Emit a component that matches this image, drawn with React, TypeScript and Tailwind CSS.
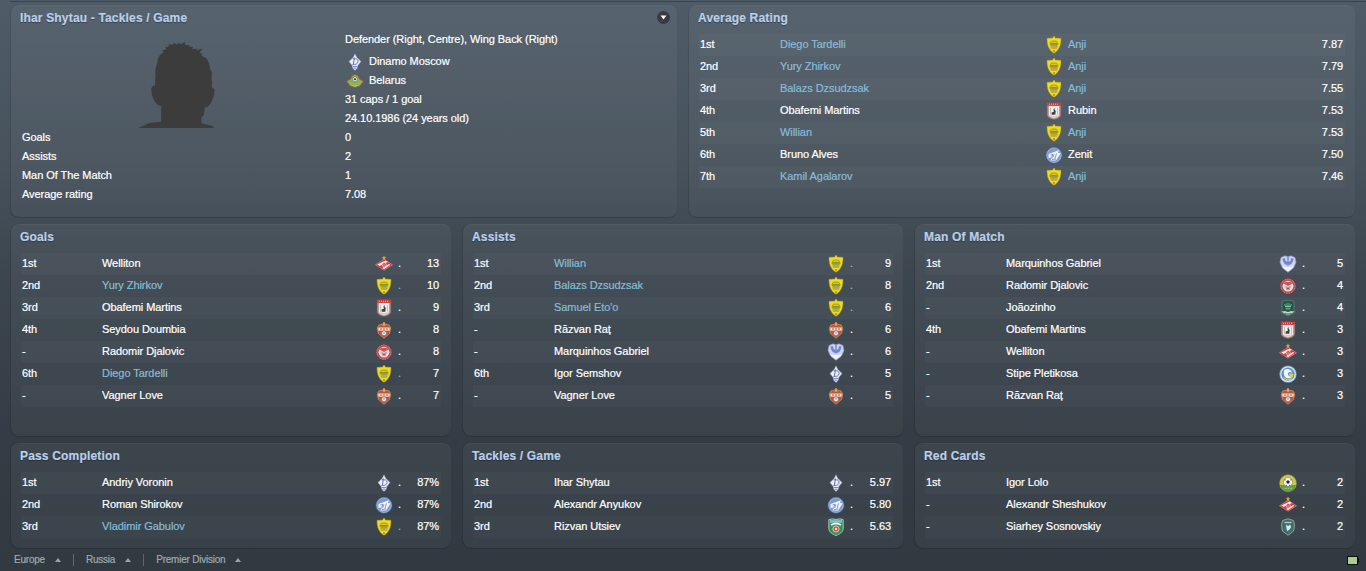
import type { ReactNode } from "react";
import clsx from "clsx";

type Club =
  | "anji"
  | "rubin"
  | "zenit"
  | "spartak"
  | "cska"
  | "amkar"
  | "dinamo"
  | "krylia"
  | "krasnodar"
  | "rostov"
  | "terek"
  | "kuban"
  | "tom"
  | "belarus";

type TRow = {
  rank: string;
  name: string;
  club: Club;
  value: string;
  team?: string;
  own?: boolean;
};

const averageRating: TRow[] = [
  { rank: "1st", name: "Diego Tardelli", club: "anji", team: "Anji", value: "7.87", own: true },
  { rank: "2nd", name: "Yury Zhirkov", club: "anji", team: "Anji", value: "7.79", own: true },
  { rank: "3rd", name: "Balazs Dzsudzsak", club: "anji", team: "Anji", value: "7.55", own: true },
  { rank: "4th", name: "Obafemi Martins", club: "rubin", team: "Rubin", value: "7.53" },
  { rank: "5th", name: "Willian", club: "anji", team: "Anji", value: "7.53", own: true },
  { rank: "6th", name: "Bruno Alves", club: "zenit", team: "Zenit", value: "7.50" },
  { rank: "7th", name: "Kamil Agalarov", club: "anji", team: "Anji", value: "7.46", own: true },
];

const goals: TRow[] = [
  { rank: "1st", name: "Welliton", club: "spartak", value: "13" },
  { rank: "2nd", name: "Yury Zhirkov", club: "anji", value: "10", own: true },
  { rank: "3rd", name: "Obafemi Martins", club: "rubin", value: "9" },
  { rank: "4th", name: "Seydou Doumbia", club: "cska", value: "8" },
  { rank: "-", name: "Radomir Djalovic", club: "amkar", value: "8" },
  { rank: "6th", name: "Diego Tardelli", club: "anji", value: "7", own: true },
  { rank: "-", name: "Vagner Love", club: "cska", value: "7" },
];

const assists: TRow[] = [
  { rank: "1st", name: "Willian", club: "anji", value: "9", own: true },
  { rank: "2nd", name: "Balazs Dzsudzsak", club: "anji", value: "8", own: true },
  { rank: "3rd", name: "Samuel Eto'o", club: "anji", value: "6", own: true },
  { rank: "-", name: "Răzvan Raț", club: "cska", value: "6" },
  { rank: "-", name: "Marquinhos Gabriel", club: "krylia", value: "6" },
  { rank: "6th", name: "Igor Semshov", club: "dinamo", value: "5" },
  { rank: "-", name: "Vagner Love", club: "cska", value: "5" },
];

const manOfMatch: TRow[] = [
  { rank: "1st", name: "Marquinhos Gabriel", club: "krylia", value: "5" },
  { rank: "2nd", name: "Radomir Djalovic", club: "amkar", value: "4" },
  { rank: "-", name: "Joãozinho", club: "krasnodar", value: "4" },
  { rank: "4th", name: "Obafemi Martins", club: "rubin", value: "3" },
  { rank: "-", name: "Welliton", club: "spartak", value: "3" },
  { rank: "-", name: "Stipe Pletikosa", club: "rostov", value: "3" },
  { rank: "-", name: "Răzvan Raț", club: "cska", value: "3" },
];

const passCompletion: TRow[] = [
  { rank: "1st", name: "Andriy Voronin", club: "dinamo", value: "87%" },
  { rank: "2nd", name: "Roman Shirokov", club: "zenit", value: "87%" },
  { rank: "3rd", name: "Vladimir Gabulov", club: "anji", value: "87%", own: true },
];

const tackles: TRow[] = [
  { rank: "1st", name: "Ihar Shytau", club: "dinamo", value: "5.97" },
  { rank: "2nd", name: "Alexandr Anyukov", club: "zenit", value: "5.80" },
  { rank: "3rd", name: "Rizvan Utsiev", club: "terek", value: "5.63" },
];

const redCards: TRow[] = [
  { rank: "1st", name: "Igor Lolo", club: "kuban", value: "2" },
  { rank: "-", name: "Alexandr Sheshukov", club: "spartak", value: "2" },
  { rank: "-", name: "Siarhey Sosnovskiy", club: "tom", value: "2" },
];

const playerStats = [
  ["Goals", "0"],
  ["Assists", "2"],
  ["Man Of The Match", "1"],
  ["Average rating", "7.08"],
];

const badges: Record<Club, ReactNode> = {
  anji: (
    <>
      <path d="M8 2V.4h2V2l6 .3c0 7-1.500 11.500-7 15-5.500-3.500-7-8-7-15z" fill="#efdb1f" stroke="#a8941c" strokeWidth=".5" />
      <path d="M5 7.200 6.500 5h5L13 7.200v1.600H5z" fill="#d9c322" stroke="#8a8226" strokeWidth=".6" />
      <path d="M5.500 7.800h7" stroke="#6b7030" strokeWidth=".9" />
      <path d="M5.500 9.800h7" stroke="#6ba04a" strokeWidth="1" />
      <path d="M5.500 11h7" stroke="#7f9590" strokeWidth="1" />
      <path d="M6 12.200h6" stroke="#cc8140" strokeWidth=".9" />
      <path d="M8 15h2" stroke="#7a6d18" strokeWidth="1" />
    </>
  ),
  rubin: (
    <>
      <path d="M2.200 1h13.600v11.500c0 2.500-2.500 4-6.800 5-4.300-1-6.800-2.500-6.800-5z" fill="#c79593" stroke="#8a6565" strokeWidth=".5" />
      <path d="M2.200.8h13.600v3H2.200z" fill="#d9363a" />
      <path d="M4 2.200h10" stroke="#f3c5c4" strokeWidth="1" strokeDasharray="1 1" />
      <path d="M4 4h10v8.500c0 1.700-2 2.800-5 3.500-3-.7-5-1.800-5-3.500z" fill="#f1efec" />
      <path d="M5.500 6v6.500c0 1 1.500 2 3.500 2.500 2-.5 3.500-1.500 3.500-2.500V6" fill="none" stroke="#9dba9f" strokeWidth=".8" />
      <path d="M10.800 5.500 9.300 7l1.400 2-.4 3.700H6.700L6.600 10.500l2.200-.8-.3-2.700z" fill="#3d3f41" />
    </>
  ),
  zenit: (
    <>
      <circle cx="9" cy="9.200" r="8.500" fill="#3f5f9d" />
      <circle cx="9" cy="9.200" r="7.300" fill="#7f9bca" stroke="#c3d1ea" strokeWidth=".6" />
      <path d="M3.500 8 13.800 4.200l-.8 2.800 2.700.3-4.700 7.200H5.500l1.500-3-3.500.5z" fill="#eef2fa" />
      <path d="m5.500 9 2.500-.6-1.500 3M9 8.500l-1.500 3.500M11.500 7.500 10 12.500m-3 1 4-.5" fill="none" stroke="#5673ab" strokeWidth=".7" />
    </>
  ),
  spartak: (
    <>
      <path d="M9 .4 9.700 2h1.700L10 3l.5 2L9 4 7.500 5 8 3 6.600 2h1.700z" fill="#dca438" />
      <path d="M9 4.200 17.600 9.800 9 15.200.4 9.800z" fill="#d6353b" stroke="#e2a09e" strokeWidth=".5" />
      <path d="M2.200 9.600 10.500 5.500l2.500 1.600-8.300 4z" fill="#f0e9e6" />
      <path d="m7 13 7-4 1.500.8L9 14.300z" fill="#f0dedb" />
      <circle cx="9.200" cy="9.800" r="2.100" fill="#c9343a" stroke="#f5eeee" strokeWidth=".6" />
      <path d="M8.200 10h2" stroke="#eee" strokeWidth=".7" />
    </>
  ),
  cska: (
    <>
      <path d="m9 1 1.700 2.300 3.300.5 1.800 3.200-1.200 5.500L9 17.300l-5.600-4.800L2.200 7 4 3.800l3.300-.5z" fill="#c65335" stroke="#d8a86f" strokeWidth=".6" />
      <path d="m9 1.500 1.500 3h-3z" fill="#e8c05b" />
      <path d="M3.300 6.500h11.400v3.200H3.300z" fill="#f0dfcd" />
      <path d="M5 8h2m1 0h2m1 0h2" stroke="#a85348" strokeWidth="1" />
      <circle cx="9" cy="12.300" r="2.500" fill="#f1eeea" stroke="#5b4c67" strokeWidth=".6" />
      <path d="M8 12h2" stroke="#7a6f8c" strokeWidth=".8" />
    </>
  ),
  amkar: (
    <>
      <circle cx="9" cy="9.200" r="8.400" fill="#70373d" />
      <circle cx="9" cy="9.200" r="7.200" fill="#b55055" stroke="#b9a5a6" strokeWidth="1" strokeDasharray="1 .8" />
      <circle cx="9" cy="9.200" r="5.400" fill="#dedada" />
      <path d="M4.500 6.500 9 9l4.500-2.500L12 5H6z" fill="#cf5259" />
      <path d="M6 8.500 9 10l3-1.500-1.500 4.500h-3z" fill="#a5a0a2" />
      <path d="M8 11.500h2" stroke="#c33d45" strokeWidth="1.200" />
    </>
  ),
  dinamo: (
    <>
      <path d="m9 .8 1.700 3.400L15 8.600l-3.300 4.200-.4 2.500L9 17.400l-2.300-2.100-.4-2.500L3 8.600l4.300-4.400z" fill="#eceef8" stroke="#8d99c8" strokeWidth=".5" />
      <path d="M6.700 5.800h2.800c3.600 0 3.300 5.600-.8 5.600H6.600M8.500 4.500 7.200 12" fill="none" stroke="#6373b7" strokeWidth="1" />
      <path d="M7 13.500h4m-3.500 1.700h3" stroke="#7c89c3" strokeWidth="1" />
    </>
  ),
  krylia: (
    <>
      <path d="M2 2.500 6 .8 9 1.800l3-1 4 1.700 1 5-2.500 5.500L9 17.300 3.500 13 1 7.500z" fill="#ccd3ef" stroke="#8694cb" strokeWidth=".7" />
      <path d="M3.500 3.500c.5 4.500 2.500 6 5 6.500V7L6.500 6 6 3.200M14.500 3.500c-.5 4.500-2.500 6-5 6.500V7l2-1 .5-2.800" fill="#6f82cb" />
      <path d="M9 2v8.500" stroke="#5367b7" strokeWidth="1" />
      <path d="M3 10.500c3.500 2 8.500 2 12 0l-2 3.200L9 16.500l-4-2.800z" fill="#eef0fa" />
    </>
  ),
  krasnodar: (
    <>
      <path d="M3 2.200 9 1l6 1.200v8.300l1 2.500-3.500 2L9 17l-3.500-2L2 13l1-2.500z" fill="#245743" stroke="#6f9284" strokeWidth=".6" />
      <path d="M5 5h2.500V3.800h3V5H13v2h-2.500v1.500h-3V7H5z" fill="#2d9063" />
      <path d="M6.500 9.800h5M6 7.500h6" stroke="#bfcfc8" strokeWidth=".8" />
      <path d="M2.500 12.500 6 12l3 1 3-1 3.500.5-2.500 1.700-4 .5-4-.5z" fill="#c6cec9" />
      <path d="M7 15.500h4" stroke="#7fa392" strokeWidth=".8" />
    </>
  ),
  rostov: (
    <>
      <circle cx="9" cy="9.200" r="8.600" fill="#89a9c9" />
      <circle cx="9" cy="9.200" r="7.200" fill="#5f93c4" stroke="#dce8f3" strokeWidth="1.200" />
      <path d="M5.500 4.800c3-2 7.500 0 7.500 3.500-2-2.500-4.500-1-4 1.200.4 2 3 2 4.500 1.700-1.500 3-6.500 2.800-8-.2-1-2-.8-4.800 0-6.200z" fill="#f3f5f3" />
      <path d="M10 8.200 14.500 9l-1 3.500-3-.5z" fill="#e3ce43" />
      <path d="M4.500 12.500c2 2.500 6 3 8 1.200" fill="none" stroke="#e3ce43" strokeWidth="1.100" />
    </>
  ),
  terek: (
    <>
      <path d="M1.800 1.600 5.500.8 9 1.600l3.500-.8 3.700.8v8.700c0 3.500-3 5.500-7.200 7.200-4.200-1.700-7.200-3.700-7.200-7.200z" fill="#2e9155" stroke="#c9d8ce" strokeWidth=".8" />
      <path d="M3 2.200h12v2.500H3z" fill="#86bed8" />
      <path d="M4 7c3-1.800 7-1.800 10 0" fill="none" stroke="#f0f0ea" strokeWidth="2" />
      <circle cx="9" cy="11" r="3.100" fill="#d8493d" stroke="#eee4da" strokeWidth=".8" />
      <circle cx="9" cy="11" r="1.200" fill="#f1e9dc" />
    </>
  ),
  kuban: (
    <>
      <circle cx="9" cy="9.200" r="8.500" fill="#cfc84a" stroke="#878a35" strokeWidth=".6" />
      <path d="M1 11h16a8.300 8.300 0 0 1-8 6.600A8.300 8.300 0 0 1 1 11z" fill="#5f9f4a" />
      <path d="M4.500 14.300h9" stroke="#b7cf7c" strokeWidth=".9" strokeDasharray="1 .5" />
      <circle cx="9" cy="8" r="4.600" fill="#f1f1ed" stroke="#6d7b51" strokeWidth=".5" />
      <path d="m9 6.200 1.800 1.300-.7 2.100H7.900L7.200 7.500zM5 6l1.200-1 .3 1.500zM13 6l-1.200-1-.3 1.500zM6.500 11.300l1.500-.4-.5 1.400zM11.500 11.300l-1.500-.4.5 1.400z" fill="#26292b" />
    </>
  ),
  tom: (
    <>
      <path d="M3.500 2.500 9 .8l5.500 1.700 1 4.500-.8 6L9 17.300 3.300 13 2.500 7z" fill="#3f6f5f" stroke="#9fb3ab" strokeWidth=".8" />
      <path d="M5.500 4.500h7" stroke="#b9ccd0" strokeWidth="1.200" />
      <path d="M5.500 6.500h7V11L9 14.500 5.500 11z" fill="#3d6f8d" />
      <path d="M7 6.500 9 8l2.300-1.500L12 9.500 10 12l-2 1-.5-2.500z" fill="#dfe7e4" />
    </>
  ),
  belarus: (
    <>
      <path d="M.5 9.200 4.500 7l1.500-3.500 3-1 3 1L13.500 7l4 2.200L14 13.800l-5 1.700-5-1.700z" fill="#86b24c" stroke="#a5513d" strokeWidth=".8" />
      <path d="M2 10c4 2.500 10 2.500 14 0l-2.500 3.200L9 14.700l-4.500-1.500z" fill="#a9c978" />
      <path d="M3 11.500c3.500 1.800 8.500 1.800 12 0" stroke="#6f9a4a" strokeWidth=".7" fill="none" />
      <circle cx="9" cy="7.200" r="2.600" fill="#f0f0ec" stroke="#54633a" strokeWidth=".6" />
      <path d="M9 6.200 10 7l-.4 1.100H8.400L8 7zM7 5.700h1M10 5.700h1" fill="#222" stroke="#222" strokeWidth=".4" />
    </>
  ),
};

const Badge = ({ club }: { club: Club }) => (
  <svg viewBox="0 0 18 18" className="size-[18px] shrink-0">
    {badges[club]}
  </svg>
);

type PanelProps = {
  title: string;
  className?: string;
  action?: ReactNode;
  children: ReactNode;
};

const Panel = ({ title, className, action, children }: PanelProps) => (
  <section
    className={clsx(
      "rounded-lg bg-linear-to-b from-white/[0.045] to-white/[0.03] px-2.5 shadow-[0_1px_1px_rgba(0,0,0,0.14),inset_0_1px_0_rgba(255,255,255,0.035),-1px_0_1px_rgba(0,0,0,0.1)]",
      className
    )}
  >
    <header className="-mr-[3px] -ml-0.5 flex h-[29px] items-start justify-between pt-1.5 pl-px">
      <h2 className="text-[12px] leading-[14px] font-bold tracking-[0.17px] text-[#b9cfec] [text-shadow:0_1px_1px_rgba(0,0,0,0.35)]">
        {title}
      </h2>
      {action}
    </header>
    {children}
  </section>
);

const RankingRow = ({ row, striped }: { row: TRow; striped: boolean }) => (
  <li className={clsx("flex h-[22px] items-center pr-0.5 pl-px", striped && "bg-white/[0.022]")}>
    <span className="w-20 pb-0.5">{row.rank}</span>
    <span className={clsx("flex-1 pb-0.5", row.own && "text-[#86bdd8]")}>{row.name}</span>
    <Badge club={row.club} />
    {row.team ? (
      <span className={clsx("flex w-[280px] justify-between pb-0.5 pl-[5px]", row.own && "text-[#86bdd8]")}>
        {row.team}
        <span className="text-white">{row.value}</span>
      </span>
    ) : (
      <span className={clsx("flex w-[46px] justify-between pb-0.5 pl-[5px]", row.own && "text-[#86bdd8]")}>
        .<span className="text-white">{row.value}</span>
      </span>
    )}
  </li>
);

const Ranking = ({ title, rows, className }: { title: string; rows: TRow[]; className?: string }) => (
  <Panel title={title} className={className}>
    <ul>
      {rows.map((row, index) => (
        <RankingRow key={index} row={row} striped={index % 2 === 0} />
      ))}
    </ul>
  </Panel>
);

const Silhouette = () => (
  <svg viewBox="413 126 230 258" className="h-[86px] w-[77px]">
    <path
      fill="#3c3c3c"
      d="M413 384 435 374 450 368 482 365V318L472 315 463 305 454 285 452 266 456 258 463 257 465 225 464 210 470 190 472 178 478 165 490 156 483 152 497 148 494 140 503 141 506 132 514 134 522 128 528 134 535 128 540 133 553 127 555 136 566 134 566 140 578 140 575 148 590 146 586 151 607 146 597 157 605 162 603 168 618 175 625 188 630 210 634 215 633 240 635 245 634 262 642 268 641 285 632 308 622 320 613 322 610 345 603 352V370L620 374 634 377 641 384Z"
    />
  </svg>
);

const DropdownButton = () => (
  <button type="button" className="flex size-[13px] items-center justify-center rounded-full bg-[#383c40]">
    <svg viewBox="0 0 8 6" className="h-[5px] w-[7px]">
      <path d="M.5.500h7L4 5.500z" fill="#fff" />
    </svg>
  </button>
);

const PlayerPanel = () => (
  <Panel title="Ihar Shytau - Tackles / Game" className="h-[212px]" action={<DropdownButton />}>
    <div className="flex h-[94px] pl-px">
      <div className="w-[323px] pt-[8px] pl-[116px]">
        <Silhouette />
      </div>
      <div className="-mt-1 leading-[19px]">
        <p className="mb-[3px]">Defender (Right, Centre), Wing Back (Right)</p>
        <p className="flex items-center gap-[5px] pl-px">
          <Badge club="dinamo" />
          Dinamo Moscow
        </p>
        <p className="flex items-center gap-[5px] pl-px">
          <Badge club="belarus" />
          Belarus
        </p>
        <p>31 caps / 1 goal</p>
        <p>24.10.1986 (24 years old)</p>
      </div>
    </div>
    <dl className="pl-px leading-[19px]">
      {playerStats.map(([label, value]) => (
        <div key={label} className="flex">
          <dt className="w-[323px]">{label}</dt>
          <dd>{value}</dd>
        </div>
      ))}
    </dl>
  </Panel>
);

const Crumb = ({ label }: { label: string }) => (
  <span className="flex items-center gap-2.5">
    {label}
    <svg viewBox="0 0 6 4" className="h-1 w-1.5">
      <path d="M0 4h6L3 0z" fill="#9aa3aa" />
    </svg>
  </span>
);

const Divider = () => <span className="mx-3 h-3 w-px bg-[#5c666f]" />;

const Footer = () => (
  <footer className="flex h-[23px] items-center pr-[7px] pl-3.5 text-[10px] tracking-[-0.22px] text-[#9fa9b1]">
    <Crumb label="Europe" />
    <Divider />
    <Crumb label="Russia" />
    <Divider />
    <Crumb label="Premier Division" />
    <svg viewBox="0 0 12 9" className="mt-0.5 ml-auto h-[9px] w-3">
      <path d="M0 0h11v2h1v5h-1v2H0z" fill="#0d0f10" />
      <path d="M1 1h9v7H1z" fill="#a9cd92" />
    </svg>
  </footer>
);

const App = () => {
  return (
    <div className="flex h-[571px] w-[1366px] flex-col overflow-hidden bg-[linear-gradient(180deg,#4f5c68_0%,#47525c_28%,#3c464f_48%,#343d45_76%,#313a41_100%)] font-['Liberation_Sans',Arial,sans-serif] text-[11px] tracking-[-0.06px] text-white [-webkit-text-stroke:0.2px]">
      <div className="mt-px mb-[3px] ml-2.5 h-px bg-[#3b454f]" />
      <main className="grid h-[543px] grid-rows-[212px_212px_105px] gap-[7px] px-[11px]">
        <div className="grid grid-cols-2 gap-3">
          <PlayerPanel />
          <Ranking title="Average Rating" rows={averageRating} />
        </div>
        <div className="grid grid-cols-3 gap-3">
          <Ranking title="Goals" rows={goals} />
          <Ranking title="Assists" rows={assists} />
          <Ranking title="Man Of Match" rows={manOfMatch} />
        </div>
        <div className="grid grid-cols-3 gap-3">
          <Ranking title="Pass Completion" rows={passCompletion} />
          <Ranking title="Tackles / Game" rows={tackles} />
          <Ranking title="Red Cards" rows={redCards} />
        </div>
      </main>
      <Footer />
    </div>
  );
};

export default App;
